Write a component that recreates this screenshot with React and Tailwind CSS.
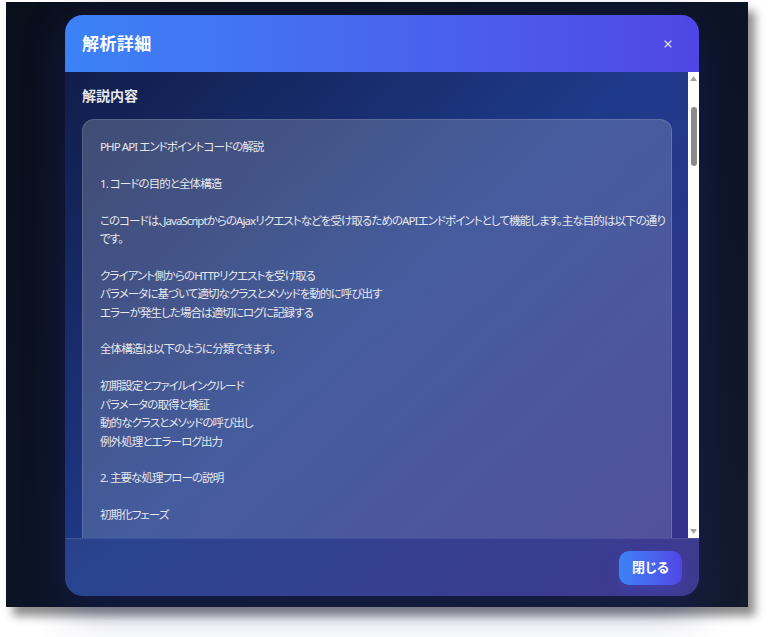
import React from "react";
import { X } from "lucide-react";

const kaisetsu = `PHP API エンドポイントコードの解説

1. コードの目的と全体構造

このコードは、JavaScriptからのAjaxリクエストなどを受け取るためのAPIエンドポイントとして機能します。主な目的は以下の通り
です。

クライアント側からのHTTPリクエストを受け取る
パラメータに基づいて適切なクラスとメソッドを動的に呼び出す
エラーが発生した場合は適切にログに記録する

全体構造は以下のように分類できます。

初期設定とファイルインクルード
パラメータの取得と検証
動的なクラスとメソッドの呼び出し
例外処理とエラーログ出力

2. 主要な処理フローの説明

初期化フェーズ

設定ファイルと共通ライブラリを読み込みます。
セッションを開始し、レスポンスヘッダーを設定します。`;

function ScrollBar() {
    return (
        <div className="w-[11px] bg-white flex flex-col items-center">
            <svg width="7" height="5" viewBox="0 0 7 5" className="mt-[4px]">
                <polygon points="3.5,0 7,5 0,5" fill="#a3a3a3" />
            </svg>
            <div className="mt-[26px] w-[6px] h-[59px] rounded-full bg-[#8b8b8b]" />
            <div className="flex-1" />
            <svg width="7" height="5" viewBox="0 0 7 5" className="mb-[4px]">
                <polygon points="0,0 7,0 3.5,5" fill="#a3a3a3" />
            </svg>
        </div>
    );
}

export default function App() {
    return (
        <div className="w-[781px] h-[637px] bg-white pt-[2px] pl-[6px] font-['Noto_Sans','Noto_Sans_CJK_JP',sans-serif]">
            <div className="w-[742px] h-[605px] pt-[13px] pl-[59px] bg-linear-to-br from-[#0a0f1c] via-[#0c1324] to-[#131a2e] shadow-[7px_9px_9px_rgba(0,0,0,0.45)]">
                {/* modal */}
                <div className="w-[634px] h-[581px] rounded-[18px] overflow-hidden flex flex-col bg-linear-to-br from-[#0f1a44] via-[#1e3a8a] to-[#34308a] shadow-[0_10px_40px_rgba(30,40,120,0.45)]">
                    <div className="h-[57px] shrink-0 flex items-center justify-between pl-[17px] pr-[25px] bg-linear-to-r from-[#3b82f6] to-[#4f46e5]">
                        <h2 className="text-[17px] font-bold text-white tracking-wide [font-feature-settings:'palt']">解析詳細</h2>
                        <button className="text-white/85">
                            <X size={12} strokeWidth={2.2} />
                        </button>
                    </div>

                    <div className="flex-1 min-h-0 flex">
                        <div className="flex-1 overflow-hidden pl-[17px] pr-[16px] pt-[14px]">
                            <h3 className="text-sm leading-5 font-bold text-gray-200 mb-[13px]">解説内容</h3>
                            <div className="rounded-xl border border-white/15 bg-linear-to-br from-white/20 to-white/15 px-[17px] pt-[18px] pb-6">
                                <p className="-mr-5 text-[11.5px] leading-[18.4px] tracking-[-0.08em] text-gray-200 whitespace-pre-wrap [font-feature-settings:'palt']">
                                    {kaisetsu}
                                </p>
                            </div>
                        </div>
                        <ScrollBar />
                    </div>

                    <div className="h-[58px] shrink-0 flex items-center justify-end pr-[17px] bg-white/5 border-t border-white/10">
                        <button className="w-[63px] h-[34px] rounded-[10px] bg-linear-to-r from-[#3b82f6] to-[#4f46e5] text-white text-[13px] font-semibold shadow-[0_4px_14px_rgba(79,70,229,0.35)] [font-feature-settings:'palt']">
                            閉じる
                        </button>
                    </div>
                </div>
            </div>
        </div>
    );
}
